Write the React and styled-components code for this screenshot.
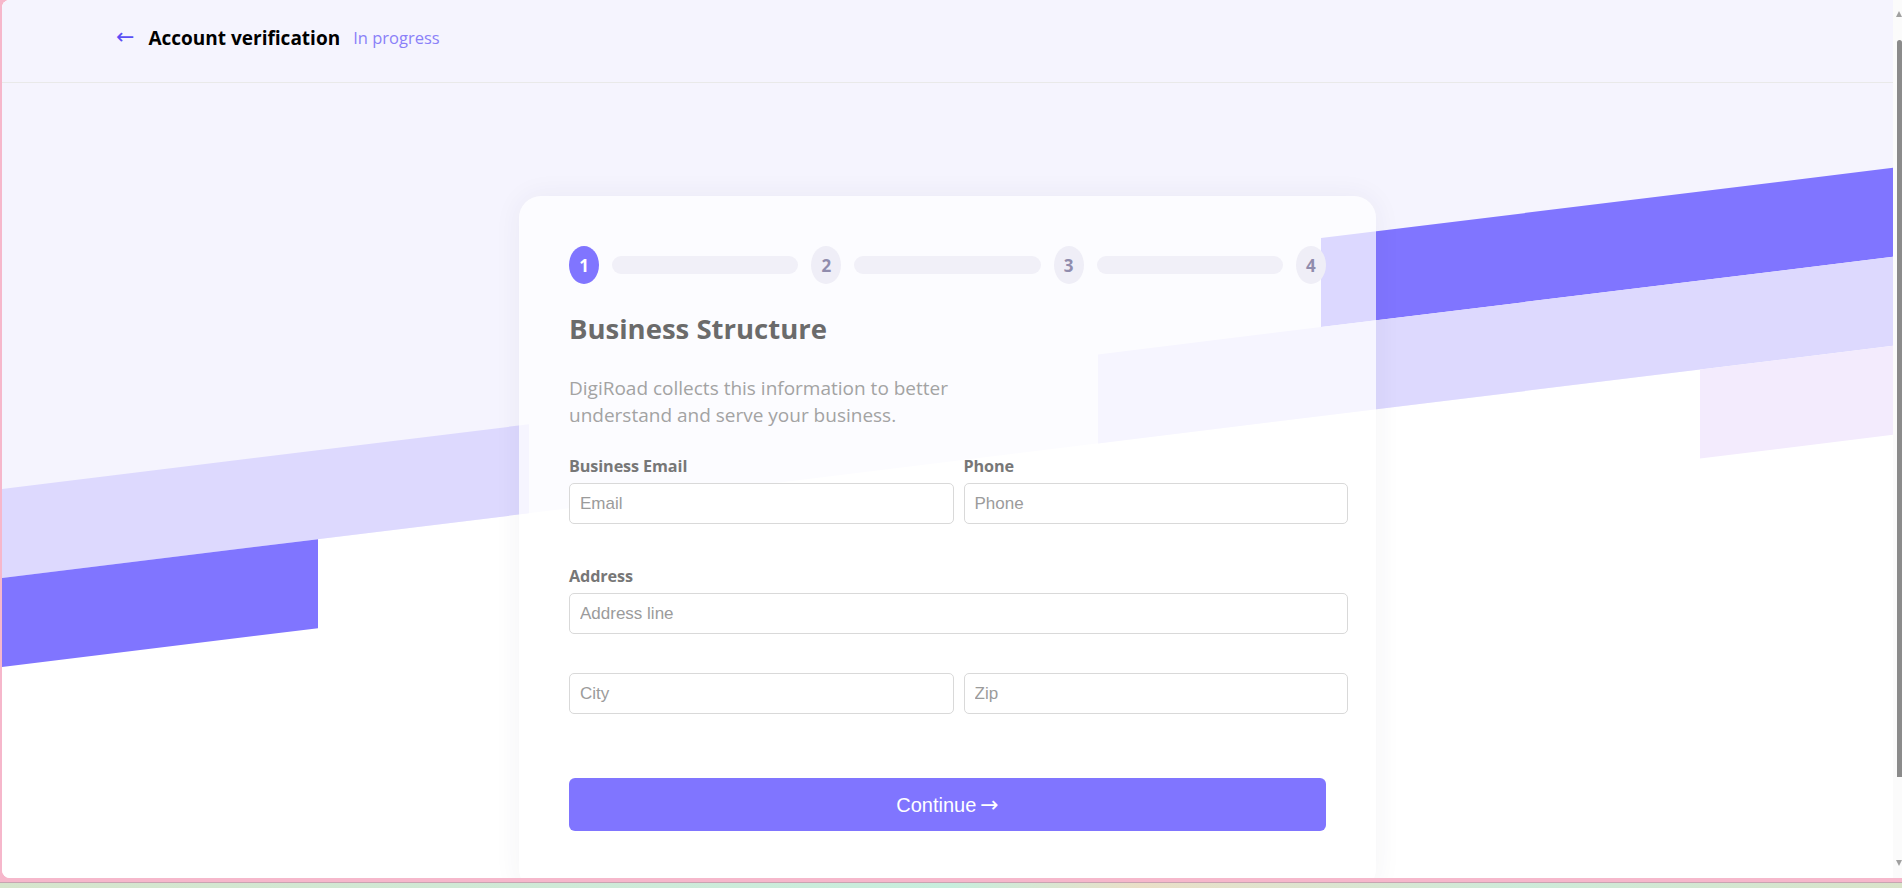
import React from 'react'
import styled, { createGlobalStyle } from 'styled-components'

const GlobalStyle = createGlobalStyle`
  html, body {
    margin: 0;
    padding: 0;
    height: 100%;
    overflow: hidden;
  }
  body {
    font-family: "Open Sans", "Noto Sans", sans-serif;
    background: #f6b7cb;
  }
  * { box-sizing: content-box; }
`;

const Screen = styled.div`
  height: 888px;
  display: flex;
  flex-direction: column;
  background: #f6b7cb;
`;

const Window = styled.div`
  height: 878px;
  margin-left: 2px;
  display: flex;
  border-radius: 8px 0 0 8px;
  overflow: hidden;
  background: #fff;
`;

const Desktop = styled.div`
  margin-top: 4px;
  height: 5px;
  border-top: 1px solid #c7a5b1;
  background: linear-gradient(90deg, #d6e5cc 0%, #cdebd9 35%, #c7eedd 50%, #eadfc7 60%, #cdebd9 80%, #d9e3c9 100%);
`;

const Viewport = styled.main`
  position: relative;
  flex: 1;
  overflow: hidden;
  background: #fff;
`;

/* skewed stripes behind everything, stripe style */
const Backdrop = styled.div`
  position: absolute;
  left: 0;
  top: 0;
  width: 100%;
  height: 578px;
  background: #f5f4fe;
  transform: skewY(-7deg);
  transform-origin: 0 0;
  display: grid;
  grid-template-columns: 316px 211px 569px 223px 379px 1fr;
  grid-template-rows: 400px 89px 89px 89px;
`;

const Stripe = styled.span`
  grid-column: ${p => p.$col};
  grid-row: ${p => p.$row};
  background: ${p => p.$color};
`;

const Header = styled.header`
  position: relative;
  z-index: 1;
  height: 75px;
  padding: 0 0 7px 114px;
  border-bottom: 1px solid #e9e9e9;
  display: flex;
  align-items: center;
`;

const BackArrow = styled.span`
  color: #5b4ef5;
  font-family: "DejaVu Sans", sans-serif;
  font-size: 22px;
  margin-right: 14px;
  margin-top: -3px;
`;

const HeaderTitle = styled.h1`
  margin: 0;
  font-size: 19px;
  font-weight: 700;
  color: #000;
`;

const Status = styled.span`
  margin-left: 13px;
  font-size: 16.5px;
  color: #8a80f8;
`;

const Card = styled.section`
  position: relative;
  z-index: 1;
  width: 757px;
  margin: 113px auto 0;
  padding: 50px 50px 60px;
  background: rgba(255, 255, 255, 0.72);
  border-radius: 22px;
  box-shadow: 0 0 28px rgba(50, 50, 93, 0.06);
`;

const Steps = styled.div`
  display: flex;
  align-items: center;
  gap: 13px;
`;

const StepDot = styled.div`
  flex: none;
  width: 30px;
  height: 38px;
  border-radius: 50%;
  display: flex;
  align-items: center;
  justify-content: center;
  font-size: 17px;
  font-weight: 700;
  background: ${p => (p.$active ? '#8075ff' : '#efeef7')};
  color: ${p => (p.$active ? '#fff' : '#908cad')};
`;

const StepBar = styled.div`
  flex: 1;
  height: 18px;
  border-radius: 9px;
  background: #f1f0f8;
`;

const Title = styled.h2`
  margin: 27px 0 0;
  font-size: 27.5px;
  line-height: 36px;
  font-weight: 700;
  color: #6b6b6b;
`;

const Desc = styled.p`
  margin: 28px 0 0;
  max-width: 400px;
  font-size: 19px;
  line-height: 27px;
  color: #a3a3a3;
`;

const Row = styled.div`
  display: grid;
  grid-template-columns: ${p => (p.$single ? '1fr' : '1fr 1fr')};
  column-gap: 32px;
  margin-top: ${p => p.$top}px;
`;

const Field = styled.label`
  display: flex;
  flex-direction: column;
`;

const Label = styled.span`
  font-size: 16.2px;
  line-height: 20px;
  font-weight: 700;
  letter-spacing: -0.1px;
  color: #777;
  margin-bottom: 7px;
`;

const Input = styled.input`
  width: 100%;
  height: 39px;
  padding: 0 10px;
  margin: 0;
  border: 1px solid #d9d9d9;
  border-radius: 5px;
  background: #fff;
  font-family: "Liberation Sans", Arial, sans-serif;
  font-size: 17px;
  color: #444;
  outline: none;

  &::placeholder {
    color: #9b9b9b;
  }
`;

const Button = styled.button`
  display: block;
  box-sizing: border-box;
  width: 100%;
  height: 53px;
  margin-top: 64px;
  padding: 0;
  border: 0;
  border-radius: 6px;
  background: #8075ff;
  color: #fff;
  font-family: "Liberation Sans", "DejaVu Sans", Arial, sans-serif;
  font-size: 20px;
  cursor: pointer;
`;

const ButtonArrow = styled.span`
  font-family: "DejaVu Sans", sans-serif;
  font-size: 22px;
  margin-left: 4px;
`;

const Scrollbar = styled.div`
  flex: none;
  width: 9px;
  background: #fbfbfb;
  display: flex;
  flex-direction: column;
  align-items: flex-end;
`;

const ScrollArrow = styled.div`
  width: 0;
  height: 0;
  margin-top: ${p => p.$top}px;
  border-left: 3px solid transparent;
  border-right: 3px solid transparent;
  ${p => (p.$down ? 'border-top' : 'border-bottom')}: 6px solid #a0a0a0;
`;

const Thumb = styled.div`
  width: 5px;
  height: 737px;
  margin-top: 23px;
  border-radius: 3px 3px 0 0;
  background: #8b8b8b;
`;

const steps = [1, 2, 3, 4]

export default function App() {
  return (
    <Screen>
      <GlobalStyle />
      <Window>
        <Viewport>
          <Backdrop>
            <Stripe $row={2} $col="5 / -1" $color="#8075ff" />
            <Stripe $row={3} $col="1 / 3" $color="#ddd9fe" />
            <Stripe $row={3} $col="4 / -1" $color="#ddd9fe" />
            <Stripe $row={4} $col="1 / 2" $color="#8075ff" />
            <Stripe $row={4} $col="6 / -1" $color="#f3ebfd" />
          </Backdrop>

          <Header>
            <BackArrow>←</BackArrow>
            <HeaderTitle>Account verification</HeaderTitle>
            <Status>In progress</Status>
          </Header>

          <Card>
            <Steps>
              {steps.map((n, i) => (
                <React.Fragment key={n}>
                  <StepDot $active={n === 1}>{n}</StepDot>
                  {i < steps.length - 1 && <StepBar />}
                </React.Fragment>
              ))}
            </Steps>

            <Title>Business Structure</Title>
            <Desc>DigiRoad collects this information to better understand and serve your business.</Desc>

            <Row $top={27}>
              <Field>
                <Label>Business Email</Label>
                <Input type="email" placeholder="Email" />
              </Field>
              <Field>
                <Label>Phone</Label>
                <Input type="tel" placeholder="Phone" />
              </Field>
            </Row>

            <Row $single $top={42}>
              <Field>
                <Label>Address</Label>
                <Input placeholder="Address line" />
              </Field>
            </Row>

            <Row $top={39}>
              <Input placeholder="City" />
              <Input placeholder="Zip" />
            </Row>

            <Button>Continue<ButtonArrow>→</ButtonArrow></Button>
          </Card>
        </Viewport>

        <Scrollbar>
          <ScrollArrow $top={11} />
          <Thumb />
          <ScrollArrow $down $top={83} />
        </Scrollbar>
      </Window>
      <Desktop />
    </Screen>
  )
}
